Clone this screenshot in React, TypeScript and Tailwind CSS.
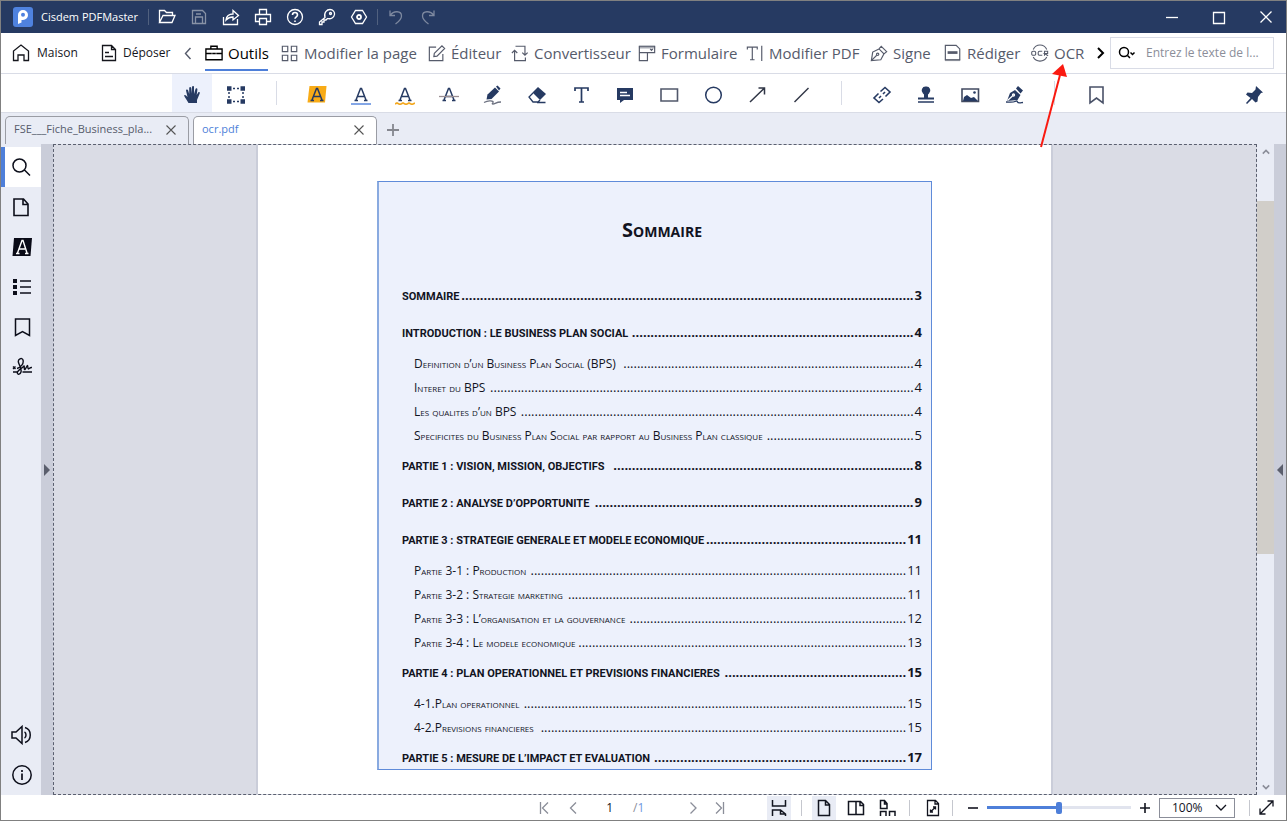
import React, { useState } from 'react';

type IconProps = { children: React.ReactNode; size?: string; box?: number; width?: number; className?: string };

const Icon: React.FC<IconProps> = ({ children, size = 'size-5', box = 20, width = 1.3, className = '' }) => (
  <svg
    viewBox={`0 0 ${box} ${box}`}
    className={`${size} shrink-0 ${className}`}
    fill="none"
    stroke="currentColor"
    strokeWidth={width}
    aria-hidden="true"
  >
    {children}
  </svg>
);

const titleActions = [
  { label: 'Ouvrir', icon: <path d="M2.5 15.5v-12h5l2 2h6v3M2.5 15.5l3.5-7h12l-3 7z" /> },
  { label: 'Enregistrer', dim: true, icon: <path d="M3.5 3.500h10l3 3v10h-13zM6.500 16v-6h7v6M7 7h5" /> },
  { label: 'Partager', icon: <path d="M2.500 10v7.500h14V12M5 13c.5-4 3-6 7-6V3.500l5.500 5L12 13V10c-3 0-5 .8-7 3z" /> },
  { label: 'Imprimer', icon: <path d="M6.500 7V2.500h7V7M6 14.500H2.500v-7h15v7H14M6.500 11.500h7v6h-7z" /> },
  {
    label: 'Aide',
    icon: (
      <>
        <circle cx="10" cy="10" r="7.5" />
        <path d="M7.500 8c0-3.300 5-3.300 5 0 0 1.800-2.500 1.800-2.500 3.800M10 13.500v1.500" strokeWidth="1.600" />
      </>
    ),
  },
  {
    label: 'Clé',
    icon: (
      <>
        <path d="M8 10.500C6.500 5.500 10 2.500 13 2.500c3 0 5 2.500 4.500 5-.5 3-3.500 5-7 4L9 13H7v2H5v2.500H2.500V15z" />
        <circle cx="13.500" cy="6.500" r="1" />
      </>
    ),
  },
  {
    label: 'Paramètres',
    icon: (
      <>
        <path d="M6.500 3.500h7l4 6.500-4 6.500h-7L2.500 10z" />
        <circle cx="10" cy="10" r="2" strokeWidth="1.800" />
      </>
    ),
  },
];

const menuItems = [
  {
    label: 'Outils',
    className: 'w-[63px] text-black',
    icon: <path d="M1 5.500h18v12H1zM6.500 5V2.500h7V5M1 10.500h6.500m5 0H19M8 10.500h4" strokeWidth="1.500" />,
  },
  {
    label: 'Modifier la page',
    className: 'w-[134px]',
    icon: <path d="M1.500 2.500h6v6h-6zM11.500 2.500h6v6h-6zM1.500 12.500h6v6h-6zM11.500 12.500h6v6h-6z" />,
  },
  {
    label: 'Éditeur',
    className: 'w-[70px]',
    icon: <path d="M9 3.500H1.500v15h15V11M7 10.500l8.500-8.500 3 3L10 13.500l-3.500.5z" />,
  },
  {
    label: 'Convertisseur',
    className: 'w-[114px]',
    icon: <path d="M5 2.500h10.500V12M12.500 9.500l3 3 3-3M4 7v11.500h12V15M1 10l3-3 3 3" />,
  },
  {
    label: 'Formulaire',
    className: 'w-[95px]',
    icon: (
      <>
        <path d="M1 3.500h18" strokeWidth="3" opacity=".5" />
        <path d="M1.500 2.500h17v7h-17zM1.500 9.500v9h9v-9M13.500 5.500l1.500 1.500 1.500-1.500" />
      </>
    ),
  },
  {
    label: 'Modifier PDF',
    className: 'w-[111px]',
    icon: <path d="M1.500 6V3.500h11V6M7 3.500v14M4.500 17.500h5M17.500 2v17" />,
  },
  {
    label: 'Signe',
    className: 'w-[61px]',
    icon: (
      <>
        <path d="M1.500 18.500L3 9l7-3.500 5.500 5.500-3.500 6.500zM10 5.500l2.500-3 6 6-3 2.500M2 18l5.500-5.500" />
        <circle cx="8.500" cy="11.500" r="1.300" />
      </>
    ),
  },
  {
    label: 'Rédiger',
    className: 'w-[74px]',
    icon: (
      <>
        <path d="M1.500 1.500h12l4 4v12h-16z" />
        <path d="M4 9.500h11" strokeWidth="3" />
        <path d="M1 18h17" strokeWidth="2" opacity=".6" />
      </>
    ),
  },
  {
    label: 'OCR',
    className: 'w-[55px]',
    icon: (
      <>
        <path d="M2.500 6c3-6.500 12-6.500 15 0M2.500 14.500c3 6 12 6 15 0" strokeWidth="1.200" />
        <path
          d="M2.300 8h1.400a1.500 1.500 0 011.500 1.500v1.500a1.500 1.500 0 01-1.500 1.500H2.300A1.500 1.500 0 01.8 11V9.500A1.500 1.500 0 012.300 8zM12.500 8H9.500a1.500 1.500 0 00-1.500 1.500V11a1.500 1.500 0 001.500 1.500h3M15 13V8h3.500v2.500H15l4 2.500"
          strokeWidth="1.200"
        />
      </>
    ),
  },
];

const letterA = <path d="M3.500 15.500H7M13 15.500h3.500M5 15L9.500 3.500h1L15 15M7 11.500h6" strokeWidth="1.500" />;

const markupTools = [
  {
    label: 'Surligner',
    icon: (
      <>
        <path d="M2.500 1h17L18 17.500H.5z" fill="#f8ab16" stroke="none" />
        {letterA}
      </>
    ),
  },
  {
    label: 'Souligner',
    icon: (
      <>
        {letterA}
        <path d="M0 19h20" stroke="#83a6e6" strokeWidth="2" />
      </>
    ),
  },
  {
    label: 'Souligner ondulé',
    icon: (
      <>
        {letterA}
        <path d="M0 19l2-1 3 1.500L8 18l3 1.500 3-1.500 3 1.500 3-1.500" stroke="#f3a820" strokeWidth="1.700" />
      </>
    ),
  },
  {
    label: 'Barrer',
    icon: (
      <>
        {letterA}
        <path d="M0 11.500h20" stroke="#9a8f93" />
      </>
    ),
  },
  {
    label: 'Crayon',
    icon: (
      <>
        <path d="M3.500 14.500l1-5L12 2.500l4 4-7.500 7.500z" fill="currentColor" stroke="none" />
        <path d="M13 1.500l1.500-1 3 3-1.500 2z" fill="currentColor" stroke="none" />
        <path d="M1 17.500c4-2 8-2 9-1s-2 2.500 0 2.500 3-2 8-2" stroke="#6c7180" />
      </>
    ),
  },
  {
    label: 'Gomme',
    icon: (
      <>
        <path d="M11 2l8 7-6 6-7.500-7.500z" fill="currentColor" stroke="none" />
        <path d="M6 8l-4 4 4 5h5l2-2M10 17.500h8.500" />
      </>
    ),
  },
  { label: 'Texte', icon: <path d="M4 6V3h13v3M10.500 3v14M8 17h5" strokeWidth="1.700" /> },
  {
    label: 'Note',
    icon: (
      <>
        <path d="M2 3h16v12H9l-4 3v-3H2z" fill="currentColor" stroke="none" />
        <path d="M5 7.500h7M5 10.500h10" stroke="#fff" />
      </>
    ),
  },
  { label: 'Rectangle', icon: <path d="M2 4h16.500v12H2z" stroke="#51586b" strokeWidth="1.600" /> },
  { label: 'Cercle', icon: <circle cx="10.500" cy="10" r="7.800" strokeWidth="1.500" /> },
  { label: 'Flèche', icon: <path d="M3 17L17.500 3M11.500 3h6v6.500" strokeWidth="1.500" stroke="#303646" /> },
  { label: 'Ligne', icon: <path d="M3.500 17l14-14" strokeWidth="1.400" stroke="#303646" /> },
];

const insertTools = [
  {
    label: 'Lien',
    icon: (
      <path
        d="M8.500 6.500L13 2.500l5 4.500-4.500 4.500M11 14l-4 3.500L2 13l4.500-4.500M7 13l2-2M11 9l2-2"
        strokeWidth="1.600"
      />
    ),
  },
  {
    label: 'Tampon',
    icon: (
      <>
        <path d="M10 1.500a4 4 0 013 7l-1 1v3h6v2H2v-2h6v-3l-1-1a4 4 0 013-7z" fill="currentColor" stroke="none" />
        <path d="M2 17h16" strokeWidth="1.500" />
      </>
    ),
  },
  {
    label: 'Image',
    icon: (
      <>
        <path d="M2 4h16.500v12.500H2z" stroke="#414a60" strokeWidth="1.600" />
        <path d="M3 16l1-4 3-2 4 3 3-1 4 4z" fill="currentColor" stroke="none" />
        <circle cx="14.500" cy="7.500" r="1.300" fill="currentColor" stroke="none" />
      </>
    ),
  },
  {
    label: 'Signature',
    icon: (
      <>
        <path d="M3 16L6 8l5-3 5.500 5-3 5zM12 3.500l2-2.500 5 4.500-2.500 3z" fill="currentColor" stroke="none" />
        <path d="M3.500 15.500l5-4.500" stroke="#fff" />
        <circle cx="9.500" cy="10" r="1" stroke="#fff" />
        <path d="M2 17c4 0 7 .5 9-.5s2-1 2.500.5 2 1 5.500.5" />
      </>
    ),
  },
];

const sideTools = [
  { label: 'Rechercher', icon: <path d="M15 8.500a6.500 6.500 0 11-13 0 6.500 6.500 0 0113 0zM13.500 13l5.500 5.500" strokeWidth="1.500" /> },
  { label: 'Vignettes', icon: <path d="M2 2h9.500l4.500 5v11.500H2zM11 2v5.500h5" strokeWidth="1.600" /> },
  {
    label: 'Annotations',
    icon: (
      <>
        <path d="M2 1h18l-1.500 18H.5z" fill="#0a0b17" stroke="none" />
        <path d="M4 16.500h3.500M13 16.500h3.500M5.500 16L10 3.500h1L15 16M7.500 12h5.500" stroke="#fff" strokeWidth="1.400" />
      </>
    ),
  },
  {
    label: 'Plan',
    icon: (
      <>
        <path d="M1 4h4M1 10h4M1 16h4" strokeWidth="4" />
        <path d="M8 4h11M8 10h11M8 16h11" strokeWidth="1.400" />
      </>
    ),
  },
  { label: 'Signets', icon: <path d="M3.500 2h14v16.500l-7-4-7 4z" strokeWidth="1.500" /> },
  {
    label: 'Signatures',
    icon: (
      <>
        <path
          d="M1 9.500l2.500 2.500M3.500 9.500L1 12M5 11.500c4-1 7-5 6-8.500-1-3-5.500-1-4.500 2.500.8 3 3.500 6 2.500 9.500-1 3.500-4.500 2.500-3.500 0 1-2.500 4.500-3.500 6.500-6 .5-.5 0 2.500.5 3.500s2.500-4 3-4 0 3.500 1 3.500 1.500-2 3.500-1.500"
          strokeWidth="1.400"
        />
        <path d="M1 15h5m4.500 0H20" strokeWidth="1.500" />
      </>
    ),
  },
];

// dots: leader length between the title and the page number
const toc = [
  { titre: 'SOMMAIRE', page: 3, dots: 122, main: true },
  { titre: 'INTRODUCTION : LE BUSINESS PLAN SOCIAL', page: 4, dots: 76, main: true },
  { titre: 'Definition d’un Business Plan Social (BPS)', page: 4, dots: 85 },
  { titre: 'Interet du BPS', page: 4, dots: 124 },
  { titre: 'Les qualites d’un BPS', page: 4, dots: 115 },
  { titre: 'Specificites du Business Plan Social par rapport au Business Plan classique', page: 5, dots: 43 },
  { titre: 'PARTIE 1 : VISION, MISSION, OBJECTIFS', page: 8, dots: 81, main: true },
  { titre: 'PARTIE 2 : ANALYSE D’OPPORTUNITE', page: 9, dots: 86, main: true },
  { titre: 'PARTIE 3 : STRATEGIE GENERALE ET MODELE ECONOMIQUE', page: 11, dots: 54, main: true },
  { titre: 'Partie 3-1 : Production', page: 11, dots: 110 },
  { titre: 'Partie 3-2 : Strategie marketing', page: 11, dots: 99 },
  { titre: 'Partie 3-3 : L’organisation et la gouvernance', page: 12, dots: 81 },
  { titre: 'Partie 3-4 : Le modele economique', page: 13, dots: 96 },
  { titre: 'PARTIE 4 : PLAN OPERATIONNEL ET PREVISIONS FINANCIERES', page: 15, dots: 49, main: true },
  { titre: '4-1.Plan operationnel', page: 15, dots: 112 },
  { titre: '4-2.Previsions financieres', page: 15, dots: 107 },
  { titre: 'PARTIE 5 : MESURE DE L’IMPACT ET EVALUATION', page: 17, dots: 68, main: true },
];

const Separator = () => (
  <div className="flex w-[33px] justify-center">
    <span className="h-6 w-px bg-[#d9dce6]" />
  </div>
);

const ToolButton = ({ label, icon, active }: { label: string; icon: React.ReactNode; active?: boolean }) => (
  <button
    aria-label={label}
    className={`flex h-full w-10 items-center justify-center pt-[3px] text-[#263a62] ${active ? 'bg-[#edf1fc]' : ''}`}
  >
    <Icon>{icon}</Icon>
  </button>
);

const TitleBar = () => (
  <header className="flex h-8 shrink-0 items-center bg-[#263a62] text-white">
    <svg viewBox="0 0 20 20" className="ml-3 size-5 shrink-0" aria-hidden="true">
      <rect width="20" height="20" rx="3" fill="#4f82df" />
      <path d="M5 17V8a5 5 0 115 5H8.500v2.500L5 17z" fill="#fff" />
      <circle cx="10" cy="7.800" r="2" fill="#4f82df" />
    </svg>
    <h1 className="ml-2 w-[107px] text-[11px] whitespace-nowrap">Cisdem PDFMaster</h1>
    <span className="mr-[2px] h-4 w-px bg-[#51617f]" />
    {titleActions.map((a) => (
      <button key={a.label} aria-label={a.label} className="flex h-8 w-8 items-center justify-center">
        <Icon className={a.dim ? 'text-[#8892a6]' : ''}>{a.icon}</Icon>
      </button>
    ))}
    <span className="mx-[2px] h-4 w-px bg-[#51617f]" />
    <button aria-label="Annuler" className="flex h-8 w-8 items-center justify-center text-[#7d889f]">
      <Icon>
        <path d="M4 3.500v5h5M4.500 8c3-4.500 11-4.500 11 1 0 3-2.500 5.500-6 8" />
      </Icon>
    </button>
    <button aria-label="Rétablir" className="flex h-8 w-8 items-center justify-center text-[#7d889f]">
      <Icon>
        <path d="M16 3.500v5h-5M15.500 8c-3-4.500-11-4.500-11 1 0 3 2.500 5.500 6 8" />
      </Icon>
    </button>
    <div className="ml-auto flex gap-[7px]">
      <button aria-label="Réduire" className="flex h-8 w-10 items-center justify-center">
        <Icon>
          <path d="M4 10.500h12" />
        </Icon>
      </button>
      <button aria-label="Agrandir" className="flex h-8 w-10 items-center justify-center">
        <Icon>
          <path d="M4.500 5.500h11v11h-11z" />
        </Icon>
      </button>
      <button aria-label="Fermer" className="flex h-8 w-10 items-center justify-center">
        <Icon>
          <path d="M4.500 4.500l11 11M15.500 4.500l-11 11" />
        </Icon>
      </button>
    </div>
  </header>
);

const MenuBar = () => (
  <nav className="flex h-[41px] shrink-0 items-center border-b border-[#d9dce6] pr-3 text-[#565b6b]">
    <button className="ml-[10px] flex w-[88px] items-center gap-[6px] text-[12px] text-[#15161c]">
      <Icon>
        <path d="M7 17.500H2.500V8L10 2l7.500 6v9.500H13V12H7z" />
      </Icon>
      Maison
    </button>
    <button className="flex w-[70px] items-center gap-1 text-[12px] text-[#15161c]">
      <Icon>
        <path d="M3.500 2.500h9l4 4v11h-13zM12.500 2.500v4h4M6 9.500h4M6 13.500h8" />
      </Icon>
      Déposer
    </button>
    <button aria-label="Menu précédent" className="flex w-9 items-center justify-center">
      <Icon width={1.4}>
        <path d="M13.500 5l-5 5.500 5 5.500" />
      </Icon>
    </button>
    <div className="flex items-center gap-[13px]">
      {menuItems.map((m) => (
        <button key={m.label} className={`relative flex h-9 items-center gap-1 whitespace-nowrap text-[15px] ${m.className}`}>
          <Icon size="size-[18px]" className="mr-px">
            {m.icon}
          </Icon>
          {m.label}
          {m.label === 'Outils' && <span className="absolute inset-x-0 bottom-0 h-[2px] bg-[#4e7fd9]" />}
          {m.label === 'OCR' && (
            <svg viewBox="0 0 30 86" className="absolute top-[28px] left-[8px] h-[86px] w-[30px]" aria-hidden="true">
              <path d="M2 84L21 12" stroke="#fa1a10" strokeWidth="2" />
              <path d="M24 1L13 11l15 3z" fill="#fa1a10" />
            </svg>
          )}
        </button>
      ))}
    </div>
    <button aria-label="Menu suivant" className="ml-auto flex w-5 items-center justify-center text-black">
      <Icon width={2}>
        <path d="M8 5l5 5-5 5" />
      </Icon>
    </button>
    <label className="flex h-8 w-[164px] items-center gap-2 border border-[#d9dce6] pl-[7px]">
      <Icon className="text-black" width={1.5}>
        <circle cx="6" cy="9" r="4.500" />
        <path d="M9.500 12.500L12 15M12.500 9.500l2 2 2-2" />
      </Icon>
      <input
        aria-label="Rechercher du texte"
        placeholder="Entrez le texte de l..."
        className="w-full min-w-0 text-[12px] outline-none placeholder:text-[#8b8e99]"
      />
    </label>
  </nav>
);

const ToolBar = () => (
  <div className="flex h-[39px] shrink-0 items-center gap-1 border-b border-[#d9dce6] pl-[171px]">
    <ToolButton
      active
      label="Main"
      icon={
        <path
          d="M6.500 18C5 15 3 13 2 10.500c.8-1.200 2-.5 3.500 1.500L4 5.500C4 4 5.800 4 6.200 5.500l1 3.500V3C7.300 1.500 9 1.500 9.200 3L9.500 8.500l.5-6.500c.2-1.500 2-1.300 2 0v7L13.500 4c.5-1.300 2-.8 1.900.5L14.700 10l1.500-2.500c.8-1 2-.2 1.500 1L15 15v3z"
          fill="currentColor"
          stroke="none"
        />
      }
    />
    <ToolButton
      label="Sélectionner"
      icon={
        <>
          <path d="M1 3.500h4.500m9 0H19M1 16.500h4.500m9 0H19" strokeWidth="4.500" />
          <path d="M3 7v6M17 7v6M7 3.500h6M7 16.500h6" strokeWidth="1.500" strokeDasharray="2 2" />
        </>
      }
    />
    <Separator />
    {markupTools.map((t) => (
      <ToolButton key={t.label} {...t} />
    ))}
    <Separator />
    {insertTools.map((t) => (
      <ToolButton key={t.label} {...t} />
    ))}
    <Separator />
    <ToolButton label="Signet" icon={<path d="M5 2h13v16l-6.500-5L5 18z" stroke="#4a5268" strokeWidth="1.600" />} />
    <div className="mr-3 ml-auto h-full">
      <ToolButton
        label="Épingler"
        icon={<path d="M12 1l7 6.500-2 .5-3 4-.5 4.500-2 1L8 14l-5 5-1-1 4.500-5L2 9.500l1.500-2L8 8l3.500-3.500z" fill="currentColor" stroke="none" />}
      />
    </div>
  </div>
);

const TabStrip = () => (
  <div className="flex h-[31px] shrink-0 items-end gap-1 bg-[#e9ecf5] pl-1 text-[11px]">
    {[
      { name: 'FSE___Fiche_Business_pla...', className: 'text-[#565b6b]' },
      { name: 'ocr.pdf', className: 'bg-white text-[#4e7fd9]' },
    ].map((tab) => (
      <div
        key={tab.name}
        className={`flex h-7 w-[184px] items-center justify-between rounded-t-[5px] border border-b-0 border-[#9a9ca4] pr-[7px] pb-[2px] pl-2 ${tab.className}`}
      >
        <span className="whitespace-nowrap">{tab.name}</span>
        <button aria-label={`Fermer ${tab.name}`} className="text-[#555]">
          <Icon width={1.1}>
            <path d="M5.500 5.500l9 9M14.500 5.500l-9 9" />
          </Icon>
        </button>
      </div>
    ))}
    <button aria-label="Nouvel onglet" className="flex h-7 w-6 items-center justify-center text-[#85878f]">
      <Icon width={1.8}>
        <path d="M10 4v12M4 10h12" />
      </Icon>
    </button>
  </div>
);

const SideBar = () => (
  <aside className="flex w-10 shrink-0 flex-col bg-[#e9ecf5] pt-[3px] text-[#0c0e1a]">
    {sideTools.map((t, idx) => (
      <button
        key={t.label}
        aria-label={t.label}
        className={`flex h-10 items-center justify-center ${idx === 0 ? 'border-l-4 border-[#4e7fd9] bg-white pr-1' : 'pl-[2px]'}`}
      >
        <Icon>{t.icon}</Icon>
      </button>
    ))}
    <button aria-label="Lire à voix haute" className="mt-auto flex h-10 items-center justify-center">
      <Icon>
        <path d="M1 7h4l6-5.500v17L5 13H1zM13.500 7c2 1 2 5 0 6M14 2.500c7 2 7 13 0 15" strokeWidth="1.500" />
      </Icon>
    </button>
    <button aria-label="Informations" className="flex h-10 items-center justify-center pl-[2px]">
      <Icon>
        <circle cx="10" cy="10" r="9.200" strokeWidth="1.500" />
        <path d="M10 5v2M10 8.500V15" strokeWidth="1.700" />
      </Icon>
    </button>
  </aside>
);

const DocumentPage = () => (
  <div className="flex w-[797px] shrink-0 justify-center border-x-2 border-[#cacdd9] bg-white pt-9">
    <article className="h-[589px] w-[555px] shrink-0 overflow-hidden border border-l-2 border-[#5f8bd9] border-l-[#89aae0] bg-[#edf1fc] pr-[9px] pl-[23px] text-[#12141f]">
      <h2 className="mt-[34px] mb-[33px] text-center text-[20px] leading-7 font-bold [font-variant:small-caps]">Sommaire</h2>
      <ol>
        {toc.map((row) => (
          <li
            key={row.titre}
            className={
              row.main
                ? 'flex h-[37px] items-baseline text-[13px] leading-[37px] font-bold'
                : 'flex h-6 items-baseline pl-3 text-[13px] leading-6'
            }
          >
            <span
              className={
                row.main
                  ? "whitespace-nowrap font-['Roboto','Open_Sans',sans-serif] text-[11px]"
                  : 'whitespace-nowrap text-[12px] [font-variant:small-caps]'
              }
            >
              {row.titre}
            </span>
            <span aria-hidden="true" className="mr-px ml-auto whitespace-nowrap">
              {'.'.repeat(row.dots)}
            </span>
            <span>{row.page}</span>
          </li>
        ))}
      </ol>
    </article>
  </div>
);

const Workspace = () => (
  <main className="flex min-h-0 flex-1">
    <SideBar />
    <button aria-label="Afficher le panneau gauche" className="flex w-3 shrink-0 items-center justify-center bg-[#cacdd9] text-[#5b5f6d]">
      <svg viewBox="0 0 6 12" className="h-3 w-[6px]" fill="currentColor" aria-hidden="true">
        <path d="M0 0l6 6-6 6z" />
      </svg>
    </button>
    <div className="flex min-w-0 flex-1 justify-center overflow-hidden border border-dashed border-[#5b6070] bg-[#dadce5] pr-px">
      <DocumentPage />
    </div>
    <div className="flex w-[17px] shrink-0 flex-col items-center bg-[#e9ecf5] text-[#8b8e99]">
      <Icon size="size-4">
        <path d="M6 12l4-4 4 4" strokeWidth="2" />
      </Icon>
      <span className="mt-[41px] h-[353px] w-full bg-[#d1cec9]" />
      <Icon size="size-4" className="mt-auto">
        <path d="M6 8l4 4 4-4" strokeWidth="2" />
      </Icon>
    </div>
    <button aria-label="Afficher le panneau droit" className="flex w-3 shrink-0 items-center justify-center bg-[#cacdd9] text-[#5b5f6d]">
      <svg viewBox="0 0 6 12" className="h-3 w-[6px]" fill="currentColor" aria-hidden="true">
        <path d="M6 0L0 6l6 6z" />
      </svg>
    </button>
  </main>
);

const StatusButton = ({ label, children, className = 'w-6' }: { label: string; children: React.ReactNode; className?: string }) => (
  <button aria-label={label} className={`flex h-6 shrink-0 items-center justify-center ${className}`}>
    <Icon>{children}</Icon>
  </button>
);

const StatusBar = () => {
  const [zoom, setZoom] = useState(50);
  const [page, setPage] = useState('1');

  return (
    <footer className="flex h-[25px] shrink-0 items-center justify-end pr-2 text-[12px] text-[#12141f]">
      <div className="flex items-center text-[#8b8e99]">
        <StatusButton label="Première page">
          <path d="M5.500 4v12M13 4.500L7.500 10l5.500 5.500" />
        </StatusButton>
        <StatusButton label="Page précédente" className="w-8">
          <path d="M13 4.500L7.500 10l5.500 5.500" />
        </StatusButton>
        <input
          aria-label="Numéro de page"
          value={page}
          onChange={(e) => setPage(e.target.value)}
          className="w-10 pr-4 text-right text-[#12141f] outline-none"
        />
        <span className="w-[50px] pl-1">
          /<span className="text-[#6f97df]">1</span>
        </span>
        <StatusButton label="Page suivante" className="w-7">
          <path d="M7.500 4.500L13 10l-5.500 5.500" />
        </StatusButton>
        <StatusButton label="Dernière page" className="mr-9 w-6">
          <path d="M14.500 4v12M7 4.500l5.500 5.500L7 15.500" />
        </StatusButton>
      </div>
      <StatusButton label="Défilement continu" className="w-6 bg-[#e9ecf5]">
        <path d="M3.500 2v6h13V2M3.500 18v-6h8l5 4v2M11.500 12v4h5" strokeWidth="1.500" />
      </StatusButton>
      <span className="mx-[10px] h-4 w-px bg-[#c5c7ce]" />
      <StatusButton label="Page simple" className="w-6 bg-[#e9ecf5]">
        <path d="M4.500 2.500h7l4 4v11h-11zM11.500 2.500v4.500h4" strokeWidth="1.500" />
      </StatusButton>
      <StatusButton label="Deux pages" className="w-10">
        <path d="M2.500 3.500h12l3 3v10h-15zM10 3.500v13M14 3.500v4h3.500" strokeWidth="1.500" />
      </StatusButton>
      <StatusButton label="Page de couverture">
        <path d="M2.500 10.500v-8h4l2.500 3v5zM2.500 18v-4.500H8V18M11.500 18v-4.500H17V18M6.500 2.500V6H9" strokeWidth="1.500" />
      </StatusButton>
      <span className="mr-[11px] ml-[9px] h-4 w-px bg-[#c5c7ce]" />
      <StatusButton label="Ajuster à la page">
        <path d="M4.500 2.500h8l3 3v12h-11zM12 2.500V6h3.500M7.500 14l5-5M12.500 11.500V9H10M7.500 11.500V14H10" strokeWidth="1.300" />
      </StatusButton>
      <span className="mr-2 ml-[7px] h-4 w-px bg-[#c5c7ce]" />
      <StatusButton label="Zoom arrière">
        <path d="M5 10h10" strokeWidth="1.600" />
      </StatusButton>
      <input
        type="range"
        aria-label="Niveau de zoom"
        min="0"
        max="100"
        value={zoom}
        onChange={(e) => setZoom(Number(e.target.value))}
        style={{ backgroundImage: `linear-gradient(to right, #4e7fd9 ${zoom}%, #e1e4ee ${zoom}%)` }}
        className="mx-[2px] h-[3px] w-[144px] appearance-none [&::-webkit-slider-thumb]:h-3 [&::-webkit-slider-thumb]:w-[6px] [&::-webkit-slider-thumb]:appearance-none [&::-webkit-slider-thumb]:rounded-[2px] [&::-webkit-slider-thumb]:bg-[#4e7fd9]"
      />
      <StatusButton label="Zoom avant">
        <path d="M5 10h10M10 5v10" strokeWidth="1.600" />
      </StatusButton>
      <div className="relative ml-[2px]">
        <select aria-label="Zoom" className="block h-5 w-[76px] appearance-none border border-[#8b8e99] bg-white pl-3 leading-4 outline-none">
          <option>100%</option>
        </select>
        <svg viewBox="0 0 12 8" className="pointer-events-none absolute top-[6px] right-[8px] h-2 w-3" fill="none" stroke="currentColor" strokeWidth="1.3">
          <path d="M1 1l5 5 5-5" />
        </svg>
      </div>
      <span className="mr-1 ml-[14px] h-4 w-px bg-[#c5c7ce]" />
      <StatusButton label="Plein écran">
        <path d="M4 16L17 3M11.500 3H17v5.500M4 10.500V16h5.500" strokeWidth="1.300" />
      </StatusButton>
    </footer>
  );
};

const App: React.FC = () => {
  return (
    <div className="flex h-screen flex-col border border-[#808080] bg-white font-['Open_Sans','Noto_Sans',sans-serif] text-[#12141f]">
      <TitleBar />
      <MenuBar />
      <ToolBar />
      <TabStrip />
      <Workspace />
      <StatusBar />
    </div>
  );
};

export default App;
